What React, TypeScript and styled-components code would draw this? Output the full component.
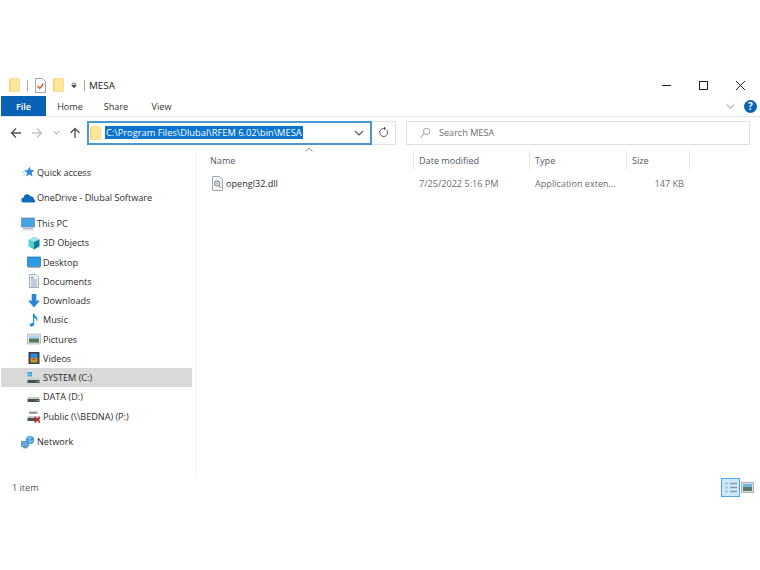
import styled, { createGlobalStyle } from "styled-components"
import { ReactNode } from "react"

const GlobalStyle = createGlobalStyle`
  html, body {
    margin: 0;
    padding: 0;
    background: #fff;
    width: 760px;
    height: 570px;
    overflow: hidden;
  }
  * {
    box-sizing: border-box;
  }
`

const FolderIcon = () => (
  <svg width="11" height="14" viewBox="0 0 11 14">
    <path d="M1.200.5h8.600c.4 0 .7.300.7.700v11.600c0 .4-.3.700-.7.700H1.200c-.4 0-.7-.3-.7-.7V1.200c0-.4.300-.7.700-.7z" fill="#fde69a" stroke="#f0d584" strokeWidth=".7" />
    <path d="M.8 1.200v11.600" stroke="#f7c95f" strokeWidth="1" />
  </svg>
)

const Star = () => (
  <svg width="14" height="14" viewBox="0 0 14 14">
    <path d="M8.300 1.500l1.400 3.500 3.800.3-2.900 2.400 1 3.800-3.300-2.100-3.200 2.100 1-3.800-2.900-2.400 3.800-.3z" fill="#2f88d8" />
    <path d="M1 7h2.500M2 10h2" stroke="#8cc4ee" strokeWidth=".9" />
  </svg>
)

const Cloud = () => (
  <svg width="14" height="14" viewBox="0 0 14 14">
    <path d="M3 11.500a2.500 2.500 0 0 1-.4-5 3.600 3.600 0 0 1 6.800-1.300 3 3 0 0 1 3.500 3 1.800 1.800 0 0 1 .4 3.300z" fill="#0f6cbd" />
  </svg>
)

const Monitor = () => (
  <svg width="14" height="14" viewBox="0 0 14 14">
    <rect x=".5" y="1" width="13" height="9" fill="#43a5e6" stroke="#6a8090" strokeWidth=".7" />
    <rect x="2" y="11" width="10" height="1" fill="#aab4bc" />
    <rect x=".5" y="12.500" width="13" height="1" fill="#cfd6db" />
  </svg>
)

const Cube = () => (
  <svg width="14" height="14" viewBox="0 0 14 14">
    <path d="M7 1l5.500 2.500v7L7 13.500z" fill="#11808f" />
    <path d="M7 1L1.500 3.500v7L7 13.500z" fill="#55cbd6" />
    <path d="M7 1l5.500 2.500L7 6 1.500 3.500z" fill="#9be6ea" />
  </svg>
)

const Desktop = () => (
  <svg width="14" height="14" viewBox="0 0 14 14">
    <rect x=".5" y="2" width="13" height="9.500" fill="#2b9be8" stroke="#256a9e" strokeWidth=".7" />
    <rect x="1" y="11.500" width="12" height="1.300" fill="#8d9aa5" />
  </svg>
)

const Documents = () => (
  <svg width="14" height="14" viewBox="0 0 14 14">
    <path d="M2.500.5h6l3 3v10h-9z" fill="#f4f6f8" stroke="#8e9aa5" strokeWidth=".8" />
    <path d="M4 6h6M4 8h6M4 10h6M4 12h6" stroke="#6b91b5" strokeWidth=".8" />
    <rect x="4" y="2.500" width="2.500" height="2.200" fill="#7ba7cc" />
  </svg>
)

const Download = () => (
  <svg width="14" height="14" viewBox="0 0 14 14">
    <path d="M4.700 0h4.600v6.500H13L7 13.500 1 6.500h3.700z" fill="#2f86d8" />
  </svg>
)

const Music = () => (
  <svg width="14" height="14" viewBox="0 0 14 14">
    <path d="M6 .5h1.200c.3 2.500 3.300 3 3.300 6 0 1-.3 1.800-.8 2.500.2-2.500-1.200-3.700-2.500-4.200v6.400c0 1.300-1.300 2.300-2.700 2.300-1.200 0-1.800-.7-1.800-1.500 0-1.100 1.200-2.100 2.600-2.100.3 0 .5 0 .7.100z" fill="#1a8ee6" />
  </svg>
)

const Pictures = () => (
  <svg width="14" height="14" viewBox="0 0 14 14">
    <rect x=".5" y="2" width="13" height="10" fill="#dfe4e8" stroke="#a8b0b6" strokeWidth=".7" />
    <rect x="2" y="3.500" width="10" height="3" fill="#a6d6f4" />
    <rect x="2" y="6.500" width="10" height="4" fill="#567a5b" />
  </svg>
)

const Videos = () => (
  <svg width="14" height="14" viewBox="0 0 14 14">
    <rect x="1.500" y="1" width="11" height="12" fill="#3d434a" />
    <rect x="3.500" y="2.500" width="7" height="4.500" fill="#2f8cd8" />
    <rect x="3.500" y="7" width="7" height="4.500" fill="#c99a2e" />
    <path d="M5 9l2-3 2 3z" fill="#d0503c" />
  </svg>
)

const Drive = ({ windows, broken }: { windows?: boolean; broken?: boolean }) => (
  <svg width="14" height="14" viewBox="0 0 14 14">
    {windows && <path d="M.5 1h2v2h-2zM3 1h2v2H3zM.5 3.500h2v2h-2zM3 3.500h2v2H3z" fill="#27a0e8" />}
    {broken && <path d="M2 2.500h8.500v2.500H2z" fill="#9aa2a8" />}
    <rect x=".5" y="7" width="12" height="2" fill="#c5cbd0" />
    <rect x=".5" y="9" width="12" height="3" fill="#4a4f53" />
    <rect x="9.500" y="10" width="2" height="1" fill="#63d06a" />
    {broken && <path d="M7.500 8l5.500 5.500M13 8l-5.500 5.500" stroke="#d81e1e" strokeWidth="1.500" />}
  </svg>
)

const Globe = () => (
  <svg width="14" height="14" viewBox="0 0 14 14">
    <circle cx="9" cy="5" r="4.300" fill="#3f9ade" />
    <path d="M6 3c2 .5 4-.5 5-1M5.500 6c2 .6 5 .6 7-.5M9 .8v8.400" stroke="#bfe2f7" strokeWidth=".6" fill="none" />
    <rect x=".5" y="6.500" width="7" height="5" fill="#60a9dd" stroke="#3a7cb0" strokeWidth=".6" />
    <rect x="2" y="12" width="4.500" height="1.300" fill="#6f8da3" />
  </svg>
)

const DllIcon = () => (
  <svg width="11" height="15" viewBox="0 0 11 15">
    <path d="M.5.500h7l3 3v11H.5z" fill="#f6f7f8" stroke="#8d9499" strokeWidth=".8" />
    <circle cx="5" cy="7.500" r="2.500" fill="none" stroke="#7f8a92" strokeWidth="1.100" />
    <circle cx="5" cy="7.500" r=".9" fill="#8fa9bd" />
    <path d="M6.800 9.500l2 2.200" stroke="#7f8a92" strokeWidth="1.100" />
  </svg>
)

const CheckDoc = () => (
  <svg width="11" height="15" viewBox="0 0 11 15">
    <path d="M.5.500h7l3 3v11H.5z" fill="#fff" stroke="#8d8d8d" strokeWidth=".8" />
    <path d="M2.500 8l2.200 2.400L8.500 5.500" fill="none" stroke="#d9542b" strokeWidth="1.300" />
  </svg>
)

const Arrow = ({ flip, up, color }: { flip?: boolean; up?: boolean; color: string }) => (
  <svg
    width="12"
    height="12"
    viewBox="0 0 12 12"
    transform={up ? "rotate(90)" : flip ? "rotate(180)" : undefined}
  >
    <path d="M11 6H1.500M6 1.500L1.500 6 6 10.500" fill="none" stroke={color} strokeWidth="1.400" />
  </svg>
)

const Chevron = ({ size = 9, color = "#555" }: { size?: number; color?: string }) => (
  <svg width={size} height={size} viewBox="0 0 10 10">
    <path d="M1 3l4 4 4-4" fill="none" stroke={color} strokeWidth="1.200" />
  </svg>
)

const NAV_GROUPS: { top: number; icon: ReactNode; label: string; sub?: boolean; active?: boolean }[] = [
  { top: 0, icon: <Star />, label: "Quick access" },
  { top: 6.5, icon: <Cloud />, label: "OneDrive - Dlubal Software" },
  { top: 6.5, icon: <Monitor />, label: "This PC" },
  { top: 0, icon: <Cube />, label: "3D Objects", sub: true },
  { top: 0, icon: <Desktop />, label: "Desktop", sub: true },
  { top: 0, icon: <Documents />, label: "Documents", sub: true },
  { top: 0, icon: <Download />, label: "Downloads", sub: true },
  { top: 0, icon: <Music />, label: "Music", sub: true },
  { top: 0, icon: <Pictures />, label: "Pictures", sub: true },
  { top: 0, icon: <Videos />, label: "Videos", sub: true },
  { top: 0, icon: <Drive windows />, label: "SYSTEM (C:)", sub: true, active: true },
  { top: 0, icon: <Drive />, label: "DATA (D:)", sub: true },
  { top: 0, icon: <Drive broken />, label: "Public (\\\\BEDNA) (P:)", sub: true },
  { top: 6.5, icon: <Globe />, label: "Network" },
]

export default function App() {
  return (
    <>
      <GlobalStyle />
      <Window>
        <TitleBar>
          <QuickTools>
            <FolderIcon />
            <Pipe />
            <CheckDoc />
            <FolderIcon />
            <svg width="6" height="7" viewBox="0 0 8 8">
              <path d="M1 1h6M1 3.500h6L4 7z" stroke="#333" strokeWidth=".9" fill="#333" />
            </svg>
            <Pipe />
          </QuickTools>
          <Title>MESA</Title>
          <WindowControls>
            <WindowButton>
              <svg width="11" height="11" viewBox="0 0 11 11">
                <path d="M1 5.500h9" stroke="#222" strokeWidth="1" />
              </svg>
            </WindowButton>
            <WindowButton>
              <svg width="11" height="11" viewBox="0 0 11 11">
                <rect x="1.500" y="1.500" width="8" height="8" fill="none" stroke="#222" strokeWidth="1" />
              </svg>
            </WindowButton>
            <WindowButton>
              <svg width="11" height="11" viewBox="0 0 11 11">
                <path d="M1 1l9 9M10 1l-9 9" stroke="#222" strokeWidth="1" />
              </svg>
            </WindowButton>
          </WindowControls>
        </TitleBar>
        <Ribbon>
          <FileTab>File</FileTab>
          <Tab $width={46}>Home</Tab>
          <Tab $width={46}>Share</Tab>
          <Tab $width={45}>View</Tab>
          <RibbonEnd>
            <Chevron size={9} color="#aaa" />
            <Help>?</Help>
          </RibbonEnd>
        </Ribbon>
        <AddressRow>
          <NavButtons>
            <Arrow color="#555" />
            <Arrow flip color="#c4c4c4" />
            <Chevron size={7} color="#777" />
            <Arrow up color="#555" />
          </NavButtons>
          <AddressBox>
            <FolderIcon />
            <PathText>C:\Program Files\Dlubal\RFEM 6.02\bin\MESA</PathText>
            <AddressChevron>
              <Chevron size={10} color="#555" />
            </AddressChevron>
          </AddressBox>
          <RefreshBox>
            <svg width="11" height="11" viewBox="0 0 11 11">
              <path d="M8.800 3a4 4 0 1 1-3.300-1.500H7M6 0l1.500 1.500L6 3" fill="none" stroke="#555" strokeWidth="1" />
            </svg>
          </RefreshBox>
          <SearchBox>
            <svg width="12" height="12" viewBox="0 0 12 12">
              <circle cx="7.500" cy="4.500" r="3.200" fill="none" stroke="#999" strokeWidth=".9" />
              <path d="M5.200 6.800L1.500 10.500" stroke="#999" strokeWidth="1" />
            </svg>
            <SearchLabel>Search MESA</SearchLabel>
          </SearchBox>
        </AddressRow>
        <Body>
          <Sidebar>
            {NAV_GROUPS.map((item) => (
              <NavRow key={item.label} $top={item.top} $sub={item.sub} $active={item.active}>
                {item.icon}
                <span>{item.label}</span>
              </NavRow>
            ))}
          </Sidebar>
          <FileList>
            <SortCaret>
              <svg width="8" height="5" viewBox="0 0 8 5">
                <path d="M.5 4.500L4 1l3.500 3.500" fill="none" stroke="#888" strokeWidth=".9" />
              </svg>
            </SortCaret>
            <HeaderRow>
              <HeaderCell $width={204}>Name</HeaderCell>
              <HeaderCell $width={116}>Date modified</HeaderCell>
              <HeaderCell $width={97}>Type</HeaderCell>
              <HeaderCell $width={63}>Size</HeaderCell>
            </HeaderRow>
            <FileRow>
              <NameCell>
                <DllIcon />
                <FileName>opengl32.dll</FileName>
              </NameCell>
              <DataCell $width={116}>7/25/2022 5:16 PM</DataCell>
              <DataCell $width={97}>Application exten...</DataCell>
              <SizeCell>147 KB</SizeCell>
            </FileRow>
          </FileList>
        </Body>
        <StatusBar>
          <span>1 item</span>
          <ViewToggles>
            <ViewToggle $active>
              <svg width="14" height="13" viewBox="0 0 14 13">
                <path d="M1 1.500h3v2H1zM1 5.500h3v2H1zM1 9.500h3v2H1z" fill="#b9c2c9" />
                <path d="M6 2.500h7M6 6.500h7M6 10.500h7" stroke="#8f99a2" strokeWidth="1.300" />
              </svg>
            </ViewToggle>
            <ViewToggle>
              <svg width="13" height="11" viewBox="0 0 13 11">
                <rect x=".5" y=".5" width="12" height="10" fill="#dde1e4" stroke="#a9afb4" />
                <rect x="2" y="2" width="9" height="3" fill="#6fb2e8" />
                <rect x="2" y="5" width="9" height="4" fill="#5b7d66" />
              </svg>
            </ViewToggle>
          </ViewToggles>
        </StatusBar>
      </Window>
    </>
  )
}

const Window = styled.div`
  display: flex;
  flex-direction: column;
  width: 760px;
  height: 570px;
  padding-top: 74px;
  font-family: "Open Sans", "Noto Sans", sans-serif;
  font-size: 9.1px;
  color: #2b2b2b;
  background: #fff;
`

const TitleBar = styled.div`
  display: flex;
  align-items: center;
  height: 22px;
  padding-left: 9px;
`

const QuickTools = styled.div`
  display: flex;
  align-items: center;
  gap: 7px;
`

const Pipe = styled.div`
  width: 1px;
  height: 11px;
  background: #a8a8a8;
`

const Title = styled.div`
  margin-left: 4px;
  font-size: 9.8px;
  color: #222;
`

const WindowControls = styled.div`
  display: flex;
  margin-left: auto;
  padding-right: 1px;
`

const WindowButton = styled.div`
  display: flex;
  justify-content: center;
  align-items: center;
  width: 37px;
  height: 22px;
`

const Ribbon = styled.div`
  display: flex;
  align-items: stretch;
  height: 21px;
  padding-left: 1px;
  border-bottom: 1px solid #e4e4e4;
`

const FileTab = styled.div`
  display: flex;
  justify-content: center;
  align-items: center;
  width: 45px;
  margin-right: 1px;
  background: #0a62b4;
  color: #fff;
  font-size: 9.1px;
  font-weight: 600;
`

const Tab = styled.div<{ $width: number }>`
  display: flex;
  justify-content: center;
  align-items: center;
  width: ${(p) => p.$width}px;
  color: #333;
`

const RibbonEnd = styled.div`
  display: flex;
  align-items: center;
  gap: 9px;
  margin-left: auto;
  padding-right: 3px;
`

const Help = styled.div`
  display: flex;
  justify-content: center;
  align-items: center;
  width: 13px;
  height: 13px;
  border-radius: 50%;
  background: #0a62b4;
  color: #fff;
  font-size: 10px;
  font-weight: 700;
`

const AddressRow = styled.div`
  display: flex;
  align-items: center;
  height: 25px;
  margin-top: 3px;
  padding-right: 10px;
`

const NavButtons = styled.div`
  display: flex;
  justify-content: space-between;
  align-items: center;
  width: 71px;
  margin-left: 10px;
  margin-right: 6px;
`

const AddressBox = styled.div`
  display: flex;
  align-items: center;
  width: 285px;
  height: 24px;
  padding-left: 1px;
  border: 2px solid #4a97d2;
`

const PathText = styled.span`
  margin-left: 4px;
  padding: 0 1px;
  background: #0a74cf;
  color: #fff;
  font-size: 9.3px;
  line-height: 13px;
  white-space: nowrap;
`

const AddressChevron = styled.div`
  display: flex;
  margin-left: auto;
  padding-right: 6px;
`

const RefreshBox = styled.div`
  display: flex;
  justify-content: center;
  align-items: center;
  width: 24px;
  height: 24px;
  border: 1px solid #e2e2e2;
  border-left: none;
`

const SearchBox = styled.div`
  display: flex;
  align-items: center;
  flex: 1;
  height: 24px;
  margin-left: 10px;
  padding-left: 12px;
  border: 1px solid #dfdfdf;
`

const SearchLabel = styled.span`
  margin-left: 8px;
  color: #6d6d6d;
`

const Body = styled.div`
  display: flex;
  flex: 1;
  min-height: 0;
  margin-top: 5px;
`

const Sidebar = styled.div`
  display: flex;
  flex-direction: column;
  width: 196px;
  padding: 12.5px 3px 0 1px;
  border-right: 1px solid #f2f2f2;
`

const NavRow = styled.div<{ $top: number; $sub?: boolean; $active?: boolean }>`
  display: flex;
  align-items: center;
  gap: 2px;
  height: 19.25px;
  margin-top: ${(p) => p.$top}px;
  padding-left: ${(p) => (p.$sub ? 26 : 20)}px;
  background: ${(p) => (p.$active ? "#d9d9d9" : "transparent")};
  color: #2b2b2b;
  white-space: nowrap;
`

const FileList = styled.div`
  position: relative;
  flex: 1;
  padding-left: 14px;
`

const SortCaret = styled.div`
  position: absolute;
  top: -3px;
  left: 109px;
  display: flex;
`

const HeaderRow = styled.div`
  display: flex;
  height: 20px;
`

const HeaderCell = styled.div<{ $width: number }>`
  display: flex;
  align-items: center;
  width: ${(p) => p.$width}px;
  border-right: 1px solid #e6e6e6;
  color: #4e5a68;
  & + & {
    padding-left: 5px;
  }
`

const FileRow = styled.div`
  display: flex;
  align-items: center;
  height: 20px;
  margin-top: 3px;
  color: #6d6d6d;
`

const NameCell = styled.div`
  display: flex;
  align-items: center;
  gap: 3px;
  width: 204px;
  padding-left: 2px;
`

const FileName = styled.span`
  color: #2b2b2b;
`

const DataCell = styled.div<{ $width: number }>`
  width: ${(p) => p.$width}px;
  padding-left: 5px;
  white-space: nowrap;
`

const SizeCell = styled.div`
  width: 57px;
  text-align: right;
`

const StatusBar = styled.div`
  display: flex;
  justify-content: space-between;
  align-items: center;
  height: 20px;
  margin-bottom: 73px;
  padding: 0 6px 0 12px;
  color: #4e5a68;
`

const ViewToggles = styled.div`
  display: flex;
  align-items: center;
  gap: 1px;
`

const ViewToggle = styled.div<{ $active?: boolean }>`
  display: flex;
  justify-content: center;
  align-items: center;
  width: ${(p) => (p.$active ? 19 : 13)}px;
  height: 19px;
  background: ${(p) => (p.$active ? "#cce8ff" : "transparent")};
  border: ${(p) => (p.$active ? "1px solid #4fa6dc" : "none")};
`
